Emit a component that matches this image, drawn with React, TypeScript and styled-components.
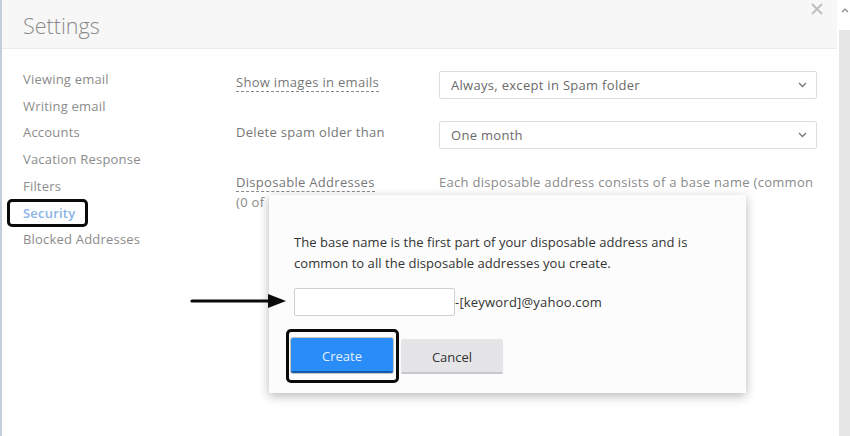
import React from "react";
import styled, { createGlobalStyle } from "styled-components";

const Global = createGlobalStyle`
  html, body { margin: 0; padding: 0; background: #fff; overflow: hidden; }
  body { font-family: "Open Sans", "Noto Sans", "Liberation Sans", sans-serif; }
  * { box-sizing: border-box; }
`;

const Page = styled.div`
  position: relative;
  width: 850px;
  height: 436px;
  display: flex;
  background: #fff;
  overflow: hidden;
`;

const EdgeLine = styled.div`
  width: 2px;
  background: #c3cedb;
`;

const Panel = styled.div`
  flex: 1;
  display: flex;
  flex-direction: column;
  background: #fff;
`;

const Header = styled.div`
  height: 49px;
  background: #f7f7f7;
  border-bottom: 1px solid #ebebeb;
  display: flex;
  justify-content: space-between;
  align-items: flex-start;
  padding: 0 14px 0 21px;
`;

const Title = styled.h1`
  margin: 0;
  padding-top: 10px;
  font-size: 21.5px;
  font-weight: 300;
  color: #8a8a8a;
  line-height: 32px;
`;

const Close = styled.div`
  margin-top: 3px;
  width: 12px;
  height: 12px;
  display: flex;
`;

const Body = styled.div`
  flex: 1;
  display: flex;
`;

const Nav = styled.ul`
  list-style: none;
  margin: 0;
  width: 234px;
  padding: 17px 0 0 21px;
`;

const NavItem = styled.li<{ $active?: boolean }>`
  font-size: 13px;
  line-height: 26.7px;
  letter-spacing: 0.2px;
  color: ${(p) => (p.$active ? "#88b3e8" : "#8c8c8c")};
  font-weight: ${(p) => (p.$active ? 600 : 400)};
  white-space: nowrap;
`;

const Content = styled.div`
  padding-top: 22px;
  display: grid;
  grid-template-columns: 203px 378px;
  grid-auto-rows: min-content;
  row-gap: 22px;
  letter-spacing: 0.3px;
`;

const Label = styled.div`
  padding-top: 2px;
  font-size: 13px;
  line-height: 18px;
  color: #777;
`;

const Dashed = styled.span`
  display: inline-block;
  line-height: 18px;
  border-bottom: 1px dashed #8a8a8a;
`;

const SubText = styled.div`
  font-size: 13px;
  line-height: 20px;
  color: #888;
  white-space: nowrap;
`;

const Select = styled.div`
  height: 28px;
  border: 1px solid #dedede;
  border-radius: 2px;
  display: flex;
  align-items: center;
  justify-content: space-between;
  padding: 0 9px 0 11px;
  font-size: 13px;
  color: #6a6a6a;
  background: #fff;
`;

const Desc = styled.div`
  padding-top: 2px;
  font-size: 13px;
  line-height: 18px;
  color: #8a8a8a;
  white-space: nowrap;
  overflow: hidden;
`;

const Scrollbar = styled.div`
  width: 11px;
  margin-left: 2px;
  display: flex;
  flex-direction: column;
`;

const ScrollTop = styled.div`
  height: 30px;
  background: #fff;
  display: flex;
  justify-content: center;
  padding-top: 8px;
`;

const ScrollTrack = styled.div`
  flex: 1;
  background: #e6e6e6;
`;

const Modal = styled.div`
  position: absolute;
  left: 269px;
  top: 195px;
  width: 477px;
  height: 198px;
  background: #fcfcfc;
  box-shadow: 0 3px 10px rgba(0, 0, 0, 0.28);
  padding: 37px 22px 0 25px;
  display: flex;
  flex-direction: column;
`;

const ModalText = styled.p`
  margin: 0;
  font-size: 13px;
  line-height: 21px;
  letter-spacing: 0.05px;
  color: #333;
`;

const InputRow = styled.div`
  margin-top: 14px;
  display: flex;
  align-items: center;
  font-size: 13px;
  letter-spacing: 0.2px;
  color: #333;
`;

const TextInput = styled.div`
  width: 161px;
  height: 28px;
  border: 1px solid #cfcfcf;
  border-radius: 2px;
  background: #fff;
`;

const Buttons = styled.div`
  margin-top: 22px;
  margin-left: -3px;
  display: flex;
  gap: 8px;
`;

const Button = styled.div<{ $primary?: boolean }>`
  width: 102px;
  height: 35px;
  display: flex;
  align-items: center;
  justify-content: center;
  padding-top: 3px;
  font-size: 13px;
  border-radius: 2px;
  background: ${(p) => (p.$primary ? "#2a8cf6" : "#e5e5e8")};
  color: ${(p) => (p.$primary ? "#e4f0ff" : "#333")};
  border-bottom: 2px solid ${(p) => (p.$primary ? "#0f5cae" : "#c8c8cc")};
  box-shadow: ${(p) => (p.$primary ? "0 0 0 1px #c8c8c8" : "none")};
  margin-top: ${(p) => (p.$primary ? "0" : "1px")};
`;

const Highlight = styled.div<{ $x: number; $y: number; $w: number; $h: number }>`
  position: absolute;
  left: ${(p) => p.$x}px;
  top: ${(p) => p.$y}px;
  width: ${(p) => p.$w}px;
  height: ${(p) => p.$h}px;
  border: 3.5px solid #0a0a0a;
  border-radius: 5px;
  pointer-events: none;
`;

const Arrow = styled.svg`
  position: absolute;
  left: 190px;
  top: 292px;
`;

const Chevron = () => (
  <svg width="9" height="6" viewBox="0 0 9 6">
    <path d="M1 1 L4.5 4.5 L8 1" fill="none" stroke="#777" strokeWidth="1.3" />
  </svg>
);

const navItems = [
  "Viewing email",
  "Writing email",
  "Accounts",
  "Vacation Response",
  "Filters",
  "Security",
  "Blocked Addresses",
];

export default function App() {
  return (
    <>
      <Global />
      <Page>
        <EdgeLine />
        <Panel>
          <Header>
            <Title>Settings</Title>
            <Close>
              <svg width="12" height="12" viewBox="0 0 12 12">
                <path d="M1 1 L11 11 M11 1 L1 11" stroke="#bdbdbd" strokeWidth="1.8" />
              </svg>
            </Close>
          </Header>
          <Body>
            <Nav>
              {navItems.map((n) => (
                <NavItem key={n} $active={n === "Security"}>
                  {n}
                </NavItem>
              ))}
            </Nav>
            <Content>
              <Label>
                <Dashed>Show images in emails</Dashed>
              </Label>
              <Select>
                Always, except in Spam folder
                <Chevron />
              </Select>
              <Label>Delete spam older than</Label>
              <Select>
                One month
                <Chevron />
              </Select>
              <Label>
                <Dashed>Disposable Addresses</Dashed>
                <SubText>(0 of 500 created)</SubText>
              </Label>
              <Desc>Each disposable address consists of a base name (common</Desc>
            </Content>
          </Body>
        </Panel>
        <Scrollbar>
          <ScrollTop>
            <svg width="8" height="5" viewBox="0 0 8 5">
              <path d="M1 4 L4 1 L7 4" fill="none" stroke="#888" strokeWidth="1.2" />
            </svg>
          </ScrollTop>
          <ScrollTrack />
        </Scrollbar>

        <Modal>
          <ModalText>
            The base name is the first part of your disposable address and is
            <br />
            common to all the disposable addresses you create.
          </ModalText>
          <InputRow>
            <TextInput />
            -[keyword]@yahoo.com
          </InputRow>
          <Buttons>
            <Button $primary>Create</Button>
            <Button>Cancel</Button>
          </Buttons>
        </Modal>

        <Highlight $x={7} $y={199} $w={81} $h={28} />
        <Highlight $x={286} $y={329} $w={113} $h={54} />
        <Arrow width="98" height="18" viewBox="0 0 98 18">
          <path d="M2 9 L82 9" stroke="#0a0a0a" strokeWidth="3.2" strokeLinecap="round" />
          <path d="M78 2 L96 9 L78 16 Z" fill="#0a0a0a" />
        </Arrow>
      </Page>
    </>
  );
}
